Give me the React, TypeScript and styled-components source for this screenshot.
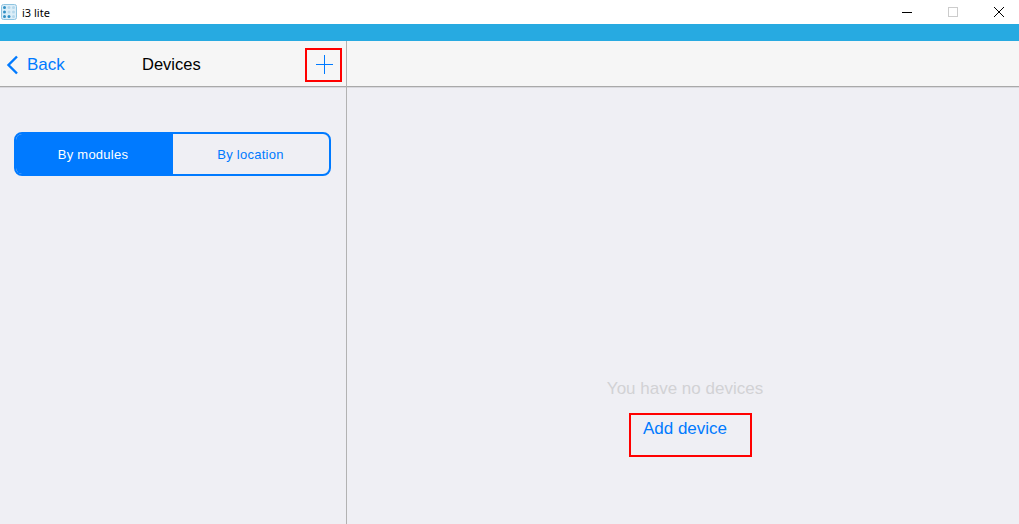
import styled, { createGlobalStyle } from 'styled-components';

const GlobalStyle = createGlobalStyle`
	html, body {
		margin: 0;
		padding: 0;
		background: #efeff4;
	}
	body {
		font-family: 'Liberation Sans', Arial, sans-serif;
	}
`;

const Page = styled.div`
	width: 1019px;
	height: 524px;
	display: flex;
	flex-direction: column;
	overflow: hidden;
`;

const TitleBar = styled.div`
	height: 24px;
	flex: none;
	display: flex;
	align-items: center;
	background: #fff;
	padding-left: 1px;
`;

const AppName = styled.span`
	margin-left: 5px;
	font-family: 'Noto Sans', sans-serif;
	font-size: 11px;
	color: #000;
`;

const WindowButtons = styled.div`
	margin-left: auto;
	margin-right: -3px;
	display: flex;
	height: 100%;
`;

const WindowButton = styled.div`
	width: 46px;
	display: flex;
	align-items: center;
	justify-content: center;
`;

const AccentBar = styled.div`
	height: 17px;
	flex: none;
	background: #27aae1;
`;

const Columns = styled.div`
	flex: 1;
	display: grid;
	grid-template-columns: 346px 1px 1fr;
	min-height: 0;
`;

const Divider = styled.div`
	background: #b2b2b2;
`;

const Pane = styled.div`
	display: flex;
	flex-direction: column;
	min-width: 0;
`;

const Header = styled.div`
	height: 45px;
	flex: none;
	position: relative;
	display: flex;
	align-items: center;
	background: #f6f6f6;
	border-bottom: 1px solid #a9a9a9;
	box-shadow: 0 1px 0 #d9d9de;
`;

const BackLink = styled.div`
	display: flex;
	align-items: center;
	gap: 8px;
	margin-left: 6px;
	padding-top: 2px;
	color: #007aff;
	font-size: 17px;
`;

const Title = styled.div`
	position: absolute;
	left: 142px;
	top: 14px;
	font-size: 16.5px;
	line-height: 19px;
	color: #000;
`;

const AddButton = styled.div`
	position: absolute;
	left: 305px;
	top: 7px;
	width: 37px;
	height: 34px;
	box-sizing: border-box;
	display: flex;
	align-items: center;
	justify-content: center;
	padding: 0 0 1px 2px;
	border: 2px solid #f00;
`;

const SegmentWrap = styled.div`
	padding: 45px 15px 0 14px;
`;

const Segment = styled.div`
	display: grid;
	grid-template-columns: 157px 1fr;
	height: 44px;
	box-sizing: border-box;
	border: 2px solid #007aff;
	border-radius: 8px;
	overflow: hidden;
`;

const SegmentItem = styled.div<{ $active?: boolean }>`
	display: flex;
	align-items: center;
	justify-content: center;
	font-size: 13px;
	letter-spacing: 0.25px;
	padding-right: ${(p) => (p.$active ? '3px' : '1px')};
	background: ${(p) => (p.$active ? '#007aff' : 'transparent')};
	color: ${(p) => (p.$active ? '#fff' : '#007aff')};
`;

const EmptyState = styled.div`
	display: flex;
	flex-direction: column;
	align-items: center;
	padding: 292px 0 0 4px;
`;

const EmptyText = styled.div`
	font-size: 17px;
	line-height: 19px;
	color: #d2d2d5;
`;

const AddDevice = styled.div`
	position: relative;
	margin-top: 21px;
	font-size: 17px;
	line-height: 19px;
	color: #007aff;
`;

const AddDeviceMark = styled.div`
	position: absolute;
	left: -14px;
	top: -6px;
	width: 123px;
	height: 44px;
	box-sizing: border-box;
	border: 2px solid #f00;
`;

const AppIcon = () => (
	<svg width="16" height="16" viewBox="0 0 16 16">
		<rect x="0.5" y="0.5" width="15" height="15" rx="2" fill="#dceef8" stroke="#8fc4e0" />
		{[3.5, 8, 12.5].map((y) =>
			[3.5, 8, 12.5].map((x) => (
				<circle
					key={`${x}-${y}`}
					cx={x}
					cy={y}
					r="1.5"
					fill={x === 3.5 || (y === 12.5 && x === 8) ? '#2f8fc4' : '#b5d8ec'}
				/>
			))
		)}
	</svg>
);

export default function App() {
	return (
		<Page>
			<GlobalStyle />
			<TitleBar>
				<AppIcon />
				<AppName>i3 lite</AppName>
				<WindowButtons>
					<WindowButton>
						<svg width="12" height="12" viewBox="0 0 12 12">
							<path d="M1 6.5H11" stroke="#000" strokeWidth="1" />
						</svg>
					</WindowButton>
					<WindowButton>
						<svg width="12" height="12" viewBox="0 0 12 12">
							<rect x="1.5" y="1.5" width="9" height="9" fill="none" stroke="#ccc" />
						</svg>
					</WindowButton>
					<WindowButton>
						<svg width="12" height="12" viewBox="0 0 12 12">
							<path d="M1 1L11 11M11 1L1 11" stroke="#000" strokeWidth="1" />
						</svg>
					</WindowButton>
				</WindowButtons>
			</TitleBar>
			<AccentBar />
			<Columns>
				<Pane>
					<Header>
						<BackLink>
							<svg width="13" height="20" viewBox="0 0 13 20">
								<path d="M11 1.5L2.5 10L11 18.5" fill="none" stroke="#007aff" strokeWidth="2.4" />
							</svg>
							Back
						</BackLink>
						<Title>Devices</Title>
						<AddButton>
							<svg width="17" height="19" viewBox="0 0 17 19">
								<path d="M0 9.5H17M8.5 0V19" stroke="#007aff" strokeWidth="1" />
							</svg>
						</AddButton>
					</Header>
					<SegmentWrap>
						<Segment>
							<SegmentItem $active>By modules</SegmentItem>
							<SegmentItem>By location</SegmentItem>
						</Segment>
					</SegmentWrap>
				</Pane>
				<Divider />
				<Pane>
					<Header />
					<EmptyState>
						<EmptyText>You have no devices</EmptyText>
						<AddDevice>
							Add device
							<AddDeviceMark />
						</AddDevice>
					</EmptyState>
				</Pane>
			</Columns>
		</Page>
	);
}
